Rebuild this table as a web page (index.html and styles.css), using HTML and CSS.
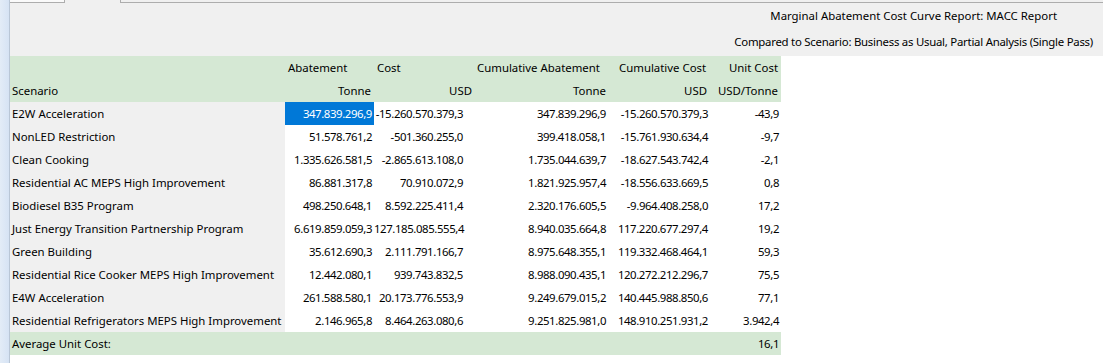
FILE: index.html
```html
<!DOCTYPE html>
<html lang="en">
<head>
    <meta charset="UTF-8">
    <title>MACC Report</title>
    <link rel="stylesheet" href="styles.css">
</head>
<body>
    <div class="side-strip"></div>
    <div class="panel">
        <!-- Tab strip -->
        <div class="tabs">
            <div class="tab"></div>
            <div class="tab tab-active"></div>
            <div class="tab-rest"></div>
        </div>

        <!-- Report titles -->
        <div class="report-head">
            <div class="title">Marginal Abatement Cost Curve Report: MACC Report</div>
            <div class="subtitle">Compared to Scenario: Business as Usual, Partial Analysis (Single Pass)</div>
        </div>

        <div class="report-body">
            <table class="macc">
                <colgroup>
                    <col class="c-name">
                    <col class="c-abate">
                    <col class="c-cost">
                    <col class="c-cumabate">
                    <col class="c-cumcost">
                    <col class="c-unit">
                </colgroup>
                <thead>
                    <tr>
                        <th></th>
                        <th class="h-abate">Abatement</th>
                        <th class="h-cost">Cost</th>
                        <th class="h-cumabate">Cumulative Abatement</th>
                        <th class="h-cumcost">Cumulative Cost</th>
                        <th class="h-unit">Unit Cost</th>
                    </tr>
                    <tr>
                        <th class="h-name">Scenario</th>
                        <th class="u-abate">Tonne</th>
                        <th class="u-cost">USD</th>
                        <th class="u-cumabate">Tonne</th>
                        <th class="u-cumcost">USD</th>
                        <th class="u-unit">USD/Tonne</th>
                    </tr>
                </thead>
                <tbody>
                    <tr>
                        <td class="name">E2W Acceleration</td>
                        <td class="abate selected">347.839.296,9</td>
                        <td class="cost">-15.260.570.379,3</td>
                        <td class="cumabate">347.839.296,9</td>
                        <td class="cumcost">-15.260.570.379,3</td>
                        <td class="unit">-43,9</td>
                    </tr>
                    <tr>
                        <td class="name">NonLED Restriction</td>
                        <td class="abate">51.578.761,2</td>
                        <td class="cost">-501.360.255,0</td>
                        <td class="cumabate">399.418.058,1</td>
                        <td class="cumcost">-15.761.930.634,4</td>
                        <td class="unit">-9,7</td>
                    </tr>
                    <tr>
                        <td class="name">Clean Cooking</td>
                        <td class="abate">1.335.626.581,5</td>
                        <td class="cost">-2.865.613.108,0</td>
                        <td class="cumabate">1.735.044.639,7</td>
                        <td class="cumcost">-18.627.543.742,4</td>
                        <td class="unit">-2,1</td>
                    </tr>
                    <tr>
                        <td class="name">Residential AC MEPS High Improvement</td>
                        <td class="abate">86.881.317,8</td>
                        <td class="cost">70.910.072,9</td>
                        <td class="cumabate">1.821.925.957,4</td>
                        <td class="cumcost">-18.556.633.669,5</td>
                        <td class="unit">0,8</td>
                    </tr>
                    <tr>
                        <td class="name">Biodiesel B35 Program</td>
                        <td class="abate">498.250.648,1</td>
                        <td class="cost">8.592.225.411,4</td>
                        <td class="cumabate">2.320.176.605,5</td>
                        <td class="cumcost">-9.964.408.258,0</td>
                        <td class="unit">17,2</td>
                    </tr>
                    <tr>
                        <td class="name">Just Energy Transition Partnership Program</td>
                        <td class="abate">6.619.859.059,3</td>
                        <td class="cost">127.185.085.555,4</td>
                        <td class="cumabate">8.940.035.664,8</td>
                        <td class="cumcost">117.220.677.297,4</td>
                        <td class="unit">19,2</td>
                    </tr>
                    <tr>
                        <td class="name">Green Building</td>
                        <td class="abate">35.612.690,3</td>
                        <td class="cost">2.111.791.166,7</td>
                        <td class="cumabate">8.975.648.355,1</td>
                        <td class="cumcost">119.332.468.464,1</td>
                        <td class="unit">59,3</td>
                    </tr>
                    <tr>
                        <td class="name">Residential Rice Cooker MEPS High Improvement</td>
                        <td class="abate">12.442.080,1</td>
                        <td class="cost">939.743.832,5</td>
                        <td class="cumabate">8.988.090.435,1</td>
                        <td class="cumcost">120.272.212.296,7</td>
                        <td class="unit">75,5</td>
                    </tr>
                    <tr>
                        <td class="name">E4W Acceleration</td>
                        <td class="abate">261.588.580,1</td>
                        <td class="cost">20.173.776.553,9</td>
                        <td class="cumabate">9.249.679.015,2</td>
                        <td class="cumcost">140.445.988.850,6</td>
                        <td class="unit">77,1</td>
                    </tr>
                    <tr>
                        <td class="name">Residential Refrigerators MEPS High Improvement</td>
                        <td class="abate">2.146.965,8</td>
                        <td class="cost">8.464.263.080,6</td>
                        <td class="cumabate">9.251.825.981,0</td>
                        <td class="cumcost">148.910.251.931,2</td>
                        <td class="unit">3.942,4</td>
                    </tr>
                </tbody>
                <tfoot>
                    <tr>
                        <td class="name">Average Unit Cost:</td>
                        <td></td>
                        <td></td>
                        <td></td>
                        <td></td>
                        <td class="unit">16,1</td>
                    </tr>
                </tfoot>
            </table>
        </div>
    </div>
</body>
</html>
```

FILE: styles.css
```css
html, body {
    margin: 0;
    height: 363px;
    overflow: hidden;
}

body {
    display: flex;
    font-family: "Segoe UI", "Noto Sans", sans-serif;
    font-size: 11.4px;
    color: #000;
    background: #fff;
}

.side-strip {
    width: 9px;
    flex: none;
    background: linear-gradient(to right, #e3ecf7, #d6e3f4);
    border-right: 1px solid #b9c6d6;
}

.panel {
    flex: 1;
    display: flex;
    flex-direction: column;
}

/* Tabs oben */
.tabs {
    display: flex;
    height: 3px;
    background: #f0f0f0;
}

.tab {
    width: 54px;
    border-right: 1px solid #adadad;
    border-bottom: 1px solid #adadad;
    background: #fafafa;
}

.tab-active {
    width: 55px;
    border-bottom: none;
    background: #f0f0f0;
}

.tab-rest {
    flex: 1;
    border-bottom: 1px solid #adadad;
}

.report-head {
    height: 53px;
    background: #f0f0f0;
    line-height: 26px;
    text-align: right;
}

.title {
    padding-right: 46px;
}

.subtitle {
    padding-right: 10px;
    letter-spacing: -0.25px;
}

.report-body {
    flex: 1;
    background: #fff;
}

/* Tabelle */
.macc {
    border-collapse: collapse;
    table-layout: fixed;
    width: 771px;
}

.macc th, .macc td {
    height: 23px;
    padding: 0;
    font-weight: normal;
    white-space: nowrap;
    overflow: hidden;
}

.macc thead tr {
    background: #d5e8d4;
}

.c-name { width: 275px; }
.c-abate { width: 89px; }
.c-cost { width: 100px; }
.c-cumabate { width: 135px; }
.c-cumcost { width: 102px; }
.c-unit { width: 70px; }

.macc .h-abate, .macc .h-cost, .macc .h-cumabate {
    text-align: left;
    padding-left: 3px;
}

.macc .h-cumcost {
    text-align: left;
    padding-left: 10px;
}

.macc .h-unit, .macc .u-unit {
    text-align: right;
    padding-right: 3px;
}

.macc .h-name {
    text-align: left;
    padding-left: 2px;
}

.u-abate, .u-cost, .u-cumabate, .u-cumcost {
    text-align: right;
}

.macc .u-abate { padding-right: 3px; }
.macc .u-cost { padding-right: 2px; }
.macc .u-cumabate { padding-right: 3px; }
.macc .u-cumcost { padding-right: 4px; }

/* Zahlen etwas enger, wie im Original */
.macc td {
    text-align: right;
    letter-spacing: -0.4px;
}

.macc td.name {
    text-align: left;
    padding-left: 2px;
    letter-spacing: 0;
    background: #f0f0f0;
}

.macc td.abate { padding-right: 2px; }
.macc td.cost { padding-right: 11px; }
.macc td.cumabate { padding-right: 3px; }
.macc td.cumcost { padding-right: 3px; }
.macc td.unit { padding-right: 2px; }

.macc td.selected {
    background: #0078d7;
    color: #fff;
}

.macc tfoot tr, .macc tfoot td.name {
    background: #d5e8d4;
}
```
